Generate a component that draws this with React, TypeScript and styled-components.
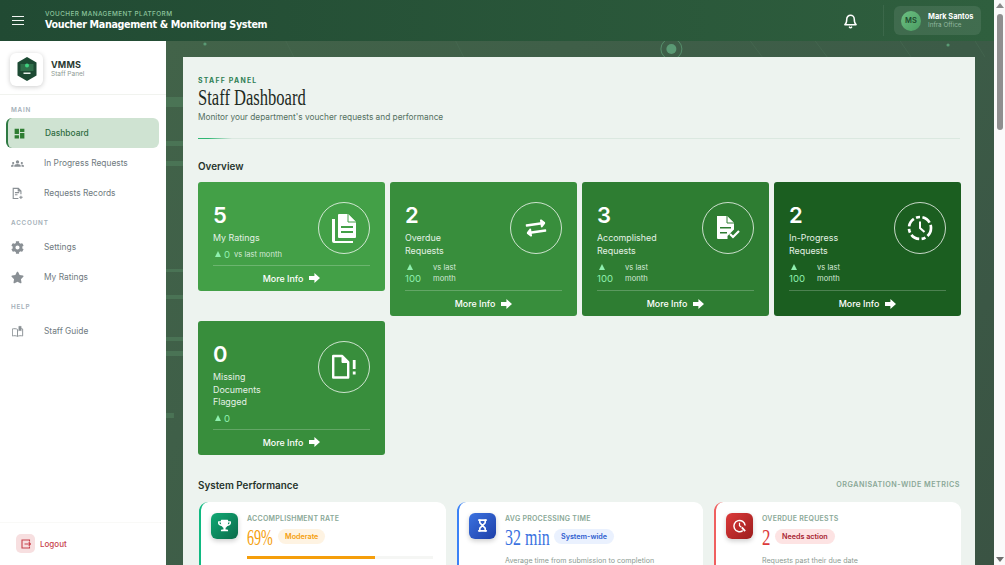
import * as React from "react";
import styled, { createGlobalStyle } from "styled-components";
import { FaCog, FaExchangeAlt, FaStar, FaTrophy } from "react-icons/fa";
import { MdDashboard, MdGroups } from "react-icons/md";
import { LuBell, LuHourglass } from "react-icons/lu";

const Global = createGlobalStyle`
  html, body { margin: 0; padding: 0; height: 100%; overflow: hidden; }
  body { font-family: Inter, "Liberation Sans", sans-serif; background: #fff; }
  * { box-sizing: border-box; }
`;

const Page = styled.div`
  display: flex;
  width: 1005px;
  height: 565px;
  overflow: hidden;
`;

const Column = styled.div`
  flex: 1;
  min-width: 0;
  display: flex;
  flex-direction: column;
`;

// ---- scrollbar ----
const Rail = styled.div`
  width: 11px;
  background: #fafafa;
  display: flex;
  flex-direction: column;
  align-items: center;
  justify-content: space-between;
  padding: 3px 0;
`;

const RailArrow = styled.div<{ $down?: boolean }>`
  width: 0;
  height: 0;
  border-left: 4px solid transparent;
  border-right: 4px solid transparent;
  ${(p) => (p.$down ? "border-top: 5px solid #6e6e6e;" : "border-bottom: 5px solid #8a8a8a;")}
`;

const RailThumb = styled.div`
  width: 6px;
  height: 116px;
  margin-top: 6px;
  border-radius: 3px;
  background: #8f8f8f;
`;

const RailTop = styled.div`
  display: flex;
  flex-direction: column;
  align-items: center;
`;

// ---- top bar ----
const TopBar = styled.header`
  height: 41px;
  flex: none;
  display: flex;
  align-items: center;
  padding: 0 13px 0 12px;
  background: linear-gradient(90deg, #214a33 0%, #2f5f3e 100%);
  color: #fff;
`;

const Burger = styled.div`
  width: 12px;
  display: flex;
  flex-direction: column;
  gap: 2.6px;
  margin-right: 21px;
  & > span { display: block; height: 1.4px; background: #f3f6f4; }
`;

const TitleBlock = styled.div`
  flex: 1;
`;

const Eyebrow = styled.div`
  font-size: 6.4px;
  font-weight: 500;
  letter-spacing: 0.42px;
  line-height: 9px;
  color: #8cc49c;
`;

const AppTitle = styled.div`
  font-family: "DejaVu Sans", sans-serif;
  font-size: 9.6px;
  font-weight: 600;
  letter-spacing: -0.35px;
  line-height: 12px;
`;

const BellWrap = styled.div`
  display: flex;
  font-size: 15px;
  padding-top: 1px;
  margin-right: 36px;
  & > svg { stroke-width: 2.4; }
`;

const UserChip = styled.div`
  width: 87px;
  height: 29px;
  display: flex;
  align-items: center;
  gap: 7px;
  padding-left: 7px;
  border-radius: 6px;
  background: rgba(255, 255, 255, 0.09);
  position: relative;
  &::before {
    content: "";
    position: absolute;
    left: -11px;
    top: -1px;
    bottom: -1px;
    width: 1px;
    background: rgba(255, 255, 255, 0.07);
  }
`;

const Avatar = styled.div`
  width: 20px;
  height: 20px;
  border-radius: 50%;
  display: flex;
  align-items: center;
  justify-content: center;
  background: linear-gradient(135deg, #6cc082, #4b9c62);
  color: #1c4a2e;
  font-size: 7.5px;
  font-weight: 600;
`;

const UserName = styled.div`
  font-size: 7.4px;
  font-weight: 700;
  line-height: 8px;
`;

const UserOffice = styled.div`
  font-size: 6.3px;
  line-height: 8px;
  color: #93b8a0;
`;

// ---- body ----
const Body = styled.div`
  flex: 1;
  min-height: 0;
  display: flex;
`;

const Sidebar = styled.aside`
  width: 166px;
  flex: none;
  display: flex;
  flex-direction: column;
  background: #fff;
`;

const Brand = styled.div`
  height: 54px;
  flex: none;
  display: flex;
  align-items: center;
  gap: 8px;
  padding: 3px 0 0 10px;
  border-bottom: 1px solid #f1f3ef;
`;

const LogoBox = styled.div`
  width: 33px;
  height: 33px;
  display: flex;
  align-items: center;
  justify-content: center;
  background: #fff;
  border-radius: 6px;
  box-shadow: 0 1px 5px rgba(0, 0, 0, 0.2);
`;

const BrandName = styled.div`
  font-size: 9px;
  font-weight: 700;
  line-height: 10px;
  letter-spacing: 0.15px;
  color: #2a3a31;
`;

const BrandSub = styled.div`
  font-size: 6.5px;
  line-height: 9px;
  color: #8e9a93;
`;

const Nav = styled.nav`
  flex: 1;
  display: flex;
  flex-direction: column;
  padding: 10px 7px 0 6px;
`;

const NavLabel = styled.div<{ $first?: boolean }>`
  height: ${(p) => (p.$first ? 13 : 14)}px;
  flex: none;
  line-height: 10px;
  padding-left: 5px;
  margin-top: ${(p) => (p.$first ? 0 : 10)}px;
  font-size: 6.3px;
  font-weight: 600;
  letter-spacing: 0.8px;
  color: #a4afb8;
`;

const NavItem = styled.div<{ $active?: boolean }>`
  height: 30px;
  flex: none;
  display: flex;
  align-items: center;
  font-size: 8.4px;
  font-weight: ${(p) => (p.$active ? 500 : 400)};
  color: ${(p) => (p.$active ? "#2e6b3f" : "#6f7a80")};
  border-radius: 6px;
  background: ${(p) => (p.$active ? "#cfe3d2" : "transparent")};
  border-left: ${(p) => (p.$active ? "2px solid #2f7a43" : "none")};
  padding-left: 5px;
  & > svg {
    width: 13px;
    height: 13px;
    flex: none;
    margin-right: ${(p) => (p.$active ? 19 : 20)}px;
    color: ${(p) => (p.$active ? "#2e7d32" : "#8a9095")};
  }
`;

const SmallGlyph = styled.svg`
  padding: 0.5px;
`;

const LogoutRow = styled.div`
  height: 42px;
  margin-top: auto;
  display: flex;
  align-items: center;
  gap: 5px;
  padding-left: 16px;
  margin-bottom: 1px;
  border-top: 1px solid #f9f9f7;
  color: #c8424c;
  font-size: 8px;
  font-weight: 500;
`;

const LogoutIcon = styled.div`
  width: 19px;
  height: 19px;
  border-radius: 5px;
  background: #f7dfe0;
  display: flex;
  align-items: center;
  justify-content: center;
`;

const Main = styled.main`
  flex: 1;
  min-width: 0;
  position: relative;
  overflow: hidden;
  padding: 16px 19px 0 17px;
  background: linear-gradient(135deg, #426349 0%, #3c5b47 60%, #3a5343 100%);
`;

const Backdrop = styled.svg`
  position: absolute;
  inset: 0;
  width: 100%;
  height: 100%;
`;

const Sheet = styled.div`
  position: relative;
  height: 600px;
  background: #edf3ef;
  padding: 19px 15px 0;
`;

const Kicker = styled.div`
  font-size: 6.9px;
  font-weight: 700;
  letter-spacing: 1.25px;
  line-height: 9px;
  color: #2f8055;
`;

const PageTitle = styled.h1`
  margin: -1px 0 0;
  font-family: "Liberation Serif", serif;
  font-size: 24px;
  font-weight: 400;
  line-height: 27px;
  color: #1d2a23;
  transform-origin: left;
  transform: scaleX(0.69);
  white-space: nowrap;
`;

const Subtitle = styled.div`
  font-size: 8.3px;
  line-height: 12px;
  color: #54705f;
`;

const Rule = styled.div`
  height: 1px;
  margin-top: 14.5px;
  background: linear-gradient(90deg, #2fb673 0, #2fb673 10px, #dbe8e0 34px, #dbe8e0 100%);
`;

const SectionTitle = styled.h2`
  margin: 20.5px 0 9px;
  font-size: 9.9px;
  font-weight: 600;
  line-height: 14px;
  color: #26332c;
`;

const StatGrid = styled.div`
  display: grid;
  grid-template-columns: repeat(4, 187px);
  gap: 5px;
  align-items: start;
`;

const StatCard = styled.div<{ $bg: string }>`
  background: ${(p) => p.$bg};
  border-radius: 3px;
  padding: 20px 15px 0;
  color: #fff;
`;

const StatTop = styled.div`
  display: flex;
  justify-content: space-between;
`;

const StatText = styled.div`
  flex: 1;
  min-width: 0;
`;

const StatNumber = styled.div`
  font-size: 22px;
  font-weight: 600;
  line-height: 27px;
`;

const StatLabel = styled.div<{ $narrow: number }>`
  max-width: ${(p) => p.$narrow}px;
  margin-top: 3px;
  font-size: 8.9px;
  line-height: 12.6px;
  color: #e4f1e6;
`;

const DeltaRow = styled.div`
  margin-top: 3px;
  display: flex;
  align-items: center;
  gap: 3px;
  height: 14px;
  font-size: 7.6px;
  color: #d5e8d8;
  white-space: nowrap;
  & > span:last-child:not(:nth-child(2)) { margin-left: 1px; }
`;

const DeltaStack = styled.div`
  margin-top: 3px;
  display: flex;
  gap: 12px;
  height: 25px;
`;

const DeltaCol = styled.div`
  display: flex;
  flex-direction: column;
  align-items: flex-start;
`;

const DeltaNote = styled.div`
  margin-top: 3px;
  font-size: 7.6px;
  line-height: 10.5px;
  color: #d5e8d8;
`;

const DeltaValue = styled.span`
  font-size: 9.6px;
  line-height: 12px;
  color: #8ff0ae;
`;

const Triangle = styled.span<{ $lift?: boolean }>`
  display: inline-block;
  width: 0;
  height: 0;
  margin: ${(p) => (p.$lift ? "4px 0 3px 2px" : "2px 0 3px 2px")};
  border-left: 3.2px solid transparent;
  border-right: 3.2px solid transparent;
  border-bottom: 6px solid #8ff0ae;
`;

const IconRing = styled.div`
  width: 52px;
  height: 52px;
  flex: none;
  border-radius: 50%;
  border: 1px solid rgba(255, 255, 255, 0.75);
  display: flex;
  align-items: center;
  justify-content: center;
`;

const SwapIcon = styled(FaExchangeAlt)`
  color: #fff;
  transform: rotate(-8deg);
`;

const MoreInfo = styled.div<{ $gapTop: number }>`
  margin-top: ${(p) => p.$gapTop}px;
  height: 26px;
  border-top: 1px solid rgba(255, 255, 255, 0.22);
  display: flex;
  align-items: center;
  justify-content: center;
  gap: 6px;
  font-size: 8.9px;
  font-weight: 500;
`;

const SectionHead = styled.div`
  margin-top: 23px;
  display: flex;
  align-items: center;
  justify-content: space-between;
`;

const SectionHeadTitle = styled.div`
  font-size: 9.9px;
  font-weight: 600;
  line-height: 14px;
  color: #26332c;
`;

const SectionNote = styled.div`
  font-size: 7.2px;
  font-weight: 600;
  letter-spacing: 0.5px;
  color: #8aa897;
`;

const PerfGrid = styled.div`
  margin-top: 10px;
  display: grid;
  grid-template-columns: 247px 246px 247px;
  column-gap: 11px;
  padding-left: 1px;
`;

const PerfCard = styled.div<{ $accent: string }>`
  height: 90px;
  display: flex;
  gap: 9px;
  padding: 11px 12px 0 10px;
  background: #fff;
  border-radius: 9px;
  border-left: 2px solid ${(p) => p.$accent};
`;

const PerfIcon = styled.div<{ $from: string; $to: string }>`
  width: 27px;
  height: 26px;
  flex: none;
  border-radius: 6px;
  display: flex;
  align-items: center;
  justify-content: center;
  color: #fff;
  background: linear-gradient(135deg, ${(p) => p.$from}, ${(p) => p.$to});
  box-shadow: 0 2px 5px rgba(0, 0, 0, 0.2);
`;

const PerfBody = styled.div`
  flex: 1;
  min-width: 0;
  padding-top: 1px;
`;

const PerfLabel = styled.div`
  font-size: 7px;
  font-weight: 600;
  letter-spacing: 0.25px;
  line-height: 10px;
  color: #8aa897;
`;

const PerfValueRow = styled.div`
  display: flex;
  align-items: center;
  height: 22px;
  margin-top: 2px;
`;

const PerfValue = styled.div<{ $color: string; $width: number; $squeeze: number }>`
  width: ${(p) => p.$width}px;
  flex: none;
  font-family: "Liberation Serif", serif;
  font-size: 23.5px;
  line-height: 22px;
  color: ${(p) => p.$color};
  transform-origin: left;
  transform: scaleX(${(p) => p.$squeeze});
  white-space: nowrap;
`;

const Badge = styled.span<{ $bg: string; $color: string }>`
  height: 15px;
  padding: 0 7px;
  border-radius: 7.5px;
  display: inline-flex;
  align-items: center;
  font-size: 7.2px;
  font-weight: 600;
  background: ${(p) => p.$bg};
  color: ${(p) => p.$color};
`;

const Bar = styled.div`
  height: 3px;
  margin-top: 8px;
  margin-right: 1px;
  background: #f5f6f4;
`;

const BarFill = styled.div`
  height: 100%;
  background: #f59e0b;
`;

const PerfNote = styled.div<{ $top: number }>`
  margin-top: ${(p) => p.$top}px;
  font-size: 7.1px;
  line-height: 10px;
  color: #8b9a91;
`;

// ---- drawn icons ----
const StackDoc = () => (
  <svg width="26" height="30" viewBox="0 0 26 30" fill="#fff">
    <path d="M8 1h9l8 8v15a1 1 0 0 1-1 1H8a1 1 0 0 1-1-1V2a1 1 0 0 1 1-1z" />
    <path d="M17 1v8h8" fill="#fff" stroke="#43a047" strokeWidth="1" />
    <path d="M10 13h12v2H10zM10 18h12v2H10z" fill="#43a047" />
    <path d="M1 6h3v22h18v2H3a2 2 0 0 1-2-2z" />
  </svg>
);

const CheckDoc = () => (
  <svg width="26" height="26" viewBox="0 0 26 26" fill="#fff">
    <path d="M2 1h10l7 7v6.5l-5.5 5.5-1 1V24H3a1 1 0 0 1-1-1z" />
    <path d="M12 1v7h7" stroke="#2e7d32" strokeWidth="1" />
    <path d="M5 12h11v1.6H5zM5 17h7v1.6H5z" fill="#2e7d32" />
    <path d="M15 19l3 3 6-6" fill="none" stroke="#fff" strokeWidth="2.2" />
  </svg>
);

const DashClock = () => (
  <svg width="26" height="26" viewBox="0 0 26 26" fill="none" stroke="#fff" strokeWidth="2.7">
    <circle cx="13" cy="13" r="11" strokeDasharray="9 2.5 4 2.5" />
    <path d="M13 6.5V13l4.5 4" strokeWidth="2" />
  </svg>
);

const AlertDoc = () => (
  <svg width="26" height="26" viewBox="0 0 26 26" fill="none">
    <path d="M2.2 2h9l6 6v15.5H2.2z" stroke="#fff" strokeWidth="2.4" strokeLinejoin="round" />
    <path d="M11 2v6.5h6.5" fill="#fff" stroke="#fff" strokeWidth="1" />
    <path d="M21.8 6h2.8v9h-2.8zM21.8 17.5h2.8v3h-2.8z" fill="#fff" />
  </svg>
);

const BlockArrow = () => (
  <svg width="11" height="10" viewBox="0 0 11 10" fill="#fff">
    <path d="M0 3h5.4V0L11 5l-5.6 5V7H0z" />
  </svg>
);

const OverdueClock = () => (
  <svg width="15" height="15" viewBox="0 0 16 16" fill="none" stroke="#fff" strokeWidth="1.6">
    <path d="M11.5 13.5A6 6 0 1 1 14 8" />
    <path d="M8 5v3.2l2 1.6" strokeWidth="1.3" />
    <path d="M10.5 10l3.5 4" strokeWidth="2" />
  </svg>
);

const RecordsGlyph = () => (
  <SmallGlyph viewBox="0 0 14 14" fill="none" stroke="currentColor" strokeWidth="1.3">
    <path d="M8 13H2V1h6l3 3v4" />
    <path d="M4 6h5M4 8.5h3" />
    <path d="M11 9.5v4M9 11.5h4" strokeWidth="1.2" />
    <path d="M7.5 1v3.5H11" fill="currentColor" strokeWidth="0.6" />
  </SmallGlyph>
);

const GuideGlyph = () => (
  <SmallGlyph viewBox="0 0 14 14" fill="none" stroke="currentColor" strokeWidth="1.1">
    <path d="M7 4.5C5.5 3.6 3 3.5 1 4v8.2c2-.5 4.5-.4 6 .5 1.5-.9 4-1 6-.5V4c-.6-.2-1.2-.2-1.8-.3" />
    <path d="M7 4.5v8.2" />
    <path d="M8.5 1h2.8v5.5L9.9 5.4 8.5 6.5z" fill="currentColor" strokeWidth="0.5" />
  </SmallGlyph>
);

const LogoMark = () => (
  <svg width="20" height="24" viewBox="0 0 20 24">
    <path d="M10 0l9.5 5.5v13L10 24 .5 18.5v-13z" fill="#1c4a33" />
    <rect x="3.5" y="7" width="13" height="7" fill="#2f6f4a" />
    <circle cx="10" cy="8.5" r="2" fill="#3ed07f" />
    <rect x="6.5" y="15.5" width="7" height="1.5" fill="#e8f2ec" />
  </svg>
);

const LogoutGlyph = () => (
  <svg width="10" height="10" viewBox="0 0 10 10" fill="none" stroke="#c8424c" strokeWidth="1.1">
    <path d="M8.5 2.5V1H1v8h7.5V7.5" />
    <path d="M3.5 5H9.5M7.8 3.2L9.5 5 7.8 6.8" />
  </svg>
);

const Delta: React.FC<{ value: string; wrap?: boolean; note?: boolean }> = ({ value, wrap, note }) =>
  wrap ? (
    <DeltaStack>
      <DeltaCol>
        <Triangle $lift />
        <DeltaValue>{value}</DeltaValue>
      </DeltaCol>
      <DeltaNote>
        vs last
        <br />
        month
      </DeltaNote>
    </DeltaStack>
  ) : (
    <DeltaRow>
      <Triangle />
      <DeltaValue>{value}</DeltaValue>
      {note && <span>vs last month</span>}
    </DeltaRow>
  );

const stats = [
  { n: "5", label: "My Ratings", w: 100, bg: "#43a047", icon: <StackDoc />, wrap: false, value: "0", note: true, gap: 3 },
  { n: "2", label: "Overdue Requests", w: 60, bg: "#388e3c", icon: <SwapIcon size={20} />, wrap: true, value: "100", note: true, gap: 5 },
  { n: "3", label: "Accomplished Requests", w: 70, bg: "#2e7d32", icon: <CheckDoc />, wrap: true, value: "100", note: true, gap: 5 },
  { n: "2", label: "In-Progress Requests", w: 60, bg: "#1b5e20", icon: <DashClock />, wrap: true, value: "100", note: true, gap: 5 },
  { n: "0", label: "Missing Documents Flagged", w: 60, bg: "#388e3c", icon: <AlertDoc />, wrap: false, value: "0", note: false, gap: 3 },
];

export default function App() {
  return (
    <Page>
      <Global />
      <Column>
        <TopBar>
          <Burger>
            <span />
            <span />
            <span />
          </Burger>
          <TitleBlock>
            <Eyebrow>VOUCHER MANAGEMENT PLATFORM</Eyebrow>
            <AppTitle>Voucher Management &amp; Monitoring System</AppTitle>
          </TitleBlock>
          <BellWrap>
            <LuBell />
          </BellWrap>
          <UserChip>
            <Avatar>MS</Avatar>
            <div>
              <UserName>Mark Santos</UserName>
              <UserOffice>Infra Office</UserOffice>
            </div>
          </UserChip>
        </TopBar>
        <Body>
          <Sidebar>
            <Brand>
              <LogoBox>
                <LogoMark />
              </LogoBox>
              <div>
                <BrandName>VMMS</BrandName>
                <BrandSub>Staff Panel</BrandSub>
              </div>
            </Brand>
            <Nav>
              <NavLabel $first>MAIN</NavLabel>
              <NavItem $active>
                <MdDashboard />
                Dashboard
              </NavItem>
              <NavItem>
                <MdGroups />
                In Progress Requests
              </NavItem>
              <NavItem>
                <RecordsGlyph />
                Requests Records
              </NavItem>
              <NavLabel>ACCOUNT</NavLabel>
              <NavItem>
                <FaCog />
                Settings
              </NavItem>
              <NavItem>
                <FaStar />
                My Ratings
              </NavItem>
              <NavLabel>HELP</NavLabel>
              <NavItem>
                <GuideGlyph />
                Staff Guide
              </NavItem>
            </Nav>
            <LogoutRow>
              <LogoutIcon>
                <LogoutGlyph />
              </LogoutIcon>
              Logout
            </LogoutRow>
          </Sidebar>
          <Main>
            <Backdrop viewBox="0 0 829 524" preserveAspectRatio="none">
              <g fill="#4e7a5a" opacity="0.75">
                <rect x="0" y="56" width="20" height="10" />
                <rect x="0" y="100" width="20" height="5" />
                <rect x="0" y="120" width="20" height="5" />
                <rect x="0" y="228" width="20" height="3" />
                <rect x="0" y="254" width="20" height="4" />
                <rect x="0" y="296" width="20" height="4" />
                <rect x="0" y="310" width="20" height="5" />
                <rect x="0" y="372" width="8" height="5" />
              </g>
              <g fill="#5a9a74">
                <circle cx="39" cy="3" r="1.6" />
                <circle cx="506" cy="8" r="5" />
                <circle cx="783" cy="4" r="1.6" />
              </g>
              <circle cx="506" cy="8" r="10.5" fill="none" stroke="#5a9a74" strokeWidth="0.8" />
              <g stroke="#4b6e56" strokeWidth="0.7" opacity="0.7">
                <path d="M585 0l12 16M650 0l12 16M735 0l11 16M810 0l10 16M120 0l8 16M290 0l8 16" />
              </g>
            </Backdrop>
            <Sheet>
              <Kicker>STAFF PANEL</Kicker>
              <PageTitle>Staff Dashboard</PageTitle>
              <Subtitle>Monitor your department's voucher requests and performance</Subtitle>
              <Rule />
              <SectionTitle>Overview</SectionTitle>
              <StatGrid>
                {stats.map((s) => (
                  <StatCard key={s.label} $bg={s.bg}>
                    <StatTop>
                      <StatText>
                        <StatNumber>{s.n}</StatNumber>
                        <StatLabel $narrow={s.w}>{s.label}</StatLabel>
                        <Delta value={s.value} wrap={s.wrap} note={s.note} />
                      </StatText>
                      <IconRing>{s.icon}</IconRing>
                    </StatTop>
                    <MoreInfo $gapTop={s.gap}>
                      More Info <BlockArrow />
                    </MoreInfo>
                  </StatCard>
                ))}
              </StatGrid>
              <SectionHead>
                <SectionHeadTitle>System Performance</SectionHeadTitle>
                <SectionNote>ORGANISATION-WIDE METRICS</SectionNote>
              </SectionHead>
              <PerfGrid>
                <PerfCard $accent="#10b981">
                  <PerfIcon $from="#10a974" $to="#0b6b4a">
                    <FaTrophy size={13} />
                  </PerfIcon>
                  <PerfBody>
                    <PerfLabel>ACCOMPLISHMENT RATE</PerfLabel>
                    <PerfValueRow>
                      <PerfValue $color="#f59e0b" $width={31} $squeeze={0.6}>69%</PerfValue>
                      <Badge $bg="#fef3e2" $color="#f59e0b">Moderate</Badge>
                    </PerfValueRow>
                    <Bar>
                      <BarFill style={{ width: "69%" }} />
                    </Bar>
                    <PerfNote $top={5}>Based on submitted requests</PerfNote>
                  </PerfBody>
                </PerfCard>
                <PerfCard $accent="#3b82f6">
                  <PerfIcon $from="#3b72e0" $to="#1e3fa8">
                    <LuHourglass size={13} strokeWidth={3} />
                  </PerfIcon>
                  <PerfBody>
                    <PerfLabel>AVG PROCESSING TIME</PerfLabel>
                    <PerfValueRow>
                      <PerfValue $color="#3b72e0" $width={49} $squeeze={0.68}>32 min</PerfValue>
                      <Badge $bg="#eaf1fe" $color="#2f5fd0">System-wide</Badge>
                    </PerfValueRow>
                    <PerfNote $top={8}>Average time from submission to completion</PerfNote>
                  </PerfBody>
                </PerfCard>
                <PerfCard $accent="#ef5f5f">
                  <PerfIcon $from="#dc3a3a" $to="#9c1c1c">
                    <OverdueClock />
                  </PerfIcon>
                  <PerfBody>
                    <PerfLabel>OVERDUE REQUESTS</PerfLabel>
                    <PerfValueRow>
                      <PerfValue $color="#dc3a3a" $width={13} $squeeze={0.72}>2</PerfValue>
                      <Badge $bg="#fde3e3" $color="#a82330">Needs action</Badge>
                    </PerfValueRow>
                    <PerfNote $top={8}>Requests past their due date</PerfNote>
                  </PerfBody>
                </PerfCard>
              </PerfGrid>
            </Sheet>
          </Main>
        </Body>
      </Column>
      <Rail>
        <RailTop>
          <RailArrow />
          <RailThumb />
        </RailTop>
        <RailArrow $down />
      </Rail>
    </Page>
  );
}
